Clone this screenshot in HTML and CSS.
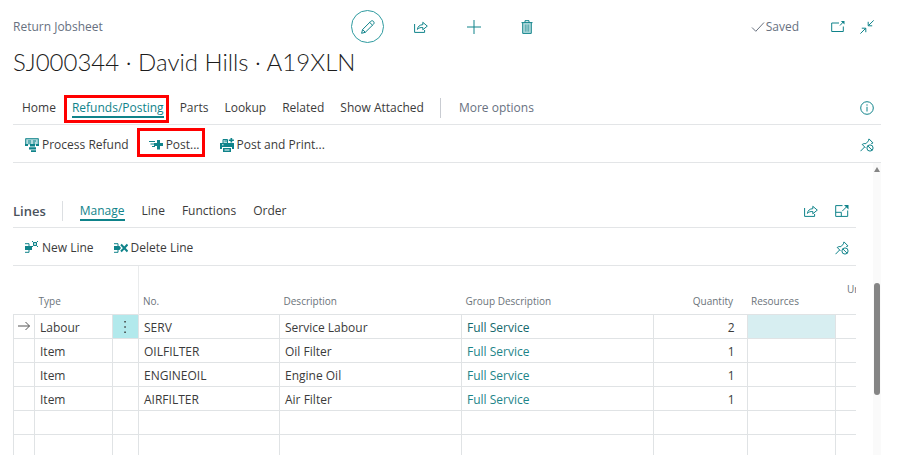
FILE: index.html
```html
<!DOCTYPE html>
<html lang="en">
<head>
<meta charset="utf-8">
<title>Return Jobsheet</title>
<link rel="stylesheet" href="styles.css">
</head>
<body>
<svg class="sprite" aria-hidden="true">
  <symbol id="share" viewBox="0 0 14 14"><path d="M.6 4v8.400h10V10M3.400 9.400c.5-3.100 2.300-4.600 5.400-4.700V2.300l4.500 3.800-4.500 3.700V7.500c-2.400-.1-4 .4-5.400 1.900z"/></symbol>
  <symbol id="pin" viewBox="0 0 14 14"><path d="M.5 13.200 4.600 9M2.200 6.400l3.200 3.300M2.200 6.500c1.300-1 2.500-1.100 3.700-.8l2.600-2.900c-.2-.7 0-1.300.5-1.900l4 4c-.5.500-1.100.7-1.800.5"/><circle cx="10" cy="10" r="3.100"/><path d="M7.800 7.900l4.300 4.300"/></symbol>
</svg>

<header class="top">
  <div class="bar">
    <span class="caption">Return Jobsheet</span>
    <div class="tools">
      <button class="tool ring" aria-label="Edit"><svg class="icon" viewBox="0 0 14 14"><path d="M.6 13.300l1-3.800L9.700 1.400c1.900-1.900 4.600.9 2.800 2.800l-8.200 8.100zM1.600 9.500l2.700 2.800M8.700 2.400l2.800 2.800"/></svg></button>
      <button class="tool" aria-label="Share"><svg class="icon"><use href="#share"/></svg></button>
      <button class="tool" aria-label="New"><svg class="icon" viewBox="0 0 14 14"><path d="M7 0v14M0 7h14"/></svg></button>
      <button class="tool" aria-label="Delete"><svg class="icon" viewBox="0 0 14 14"><path class="tint" d="M3 3h8v10.400H3z"/><path d="M1.500 2.600h11M5 2.400V.7h4v1.700M2.700 2.800v10.600h8.600V2.800"/><path class="fine" d="M5.300 4.500v7.200M7 4.500v7.200M8.700 4.500v7.200"/></svg></button>
    </div>
    <div class="status">
      <span class="saved"><svg class="icon" viewBox="0 0 14 14"><path d="M1 7.500l3.800 3.800L13 2.500"/></svg>Saved</span>
      <button aria-label="Open in new window"><svg class="icon" viewBox="0 0 14 14"><path d="M8 3H.7v8.500h11.600V6.500M9 5.500l3.300-3.600"/><path class="solid" d="M9.800 1h3.700v3.600z"/></svg></button>
      <button aria-label="Collapse"><svg class="icon" viewBox="0 0 14 14"><path d="M13.700.4 8.300 5.700M8.200 1.800v4h4M.4 13.600l5.300-5.300M1.800 8.200h4v4"/></svg></button>
    </div>
  </div>
  <h1>SJ000344 · David Hills · A19XLN</h1>
  <nav class="tabs">
    <button>Home</button>
    <button class="active marked">Refunds/Posting</button>
    <button>Parts</button>
    <button>Lookup</button>
    <button>Related</button>
    <button>Show Attached</button>
    <button class="more">More options</button>
    <button class="end" aria-label="Details"><svg class="icon" viewBox="0 0 14 14"><circle cx="7" cy="7" r="6.300"/><path d="M7 5.800V10.500M7 3.300v1.400"/></svg></button>
  </nav>
  <div class="actions">
    <button><svg class="icon" viewBox="0 0 14 14"><path class="tint" d="M1 1h12v6H1z"/><path d="M.5.7h13M.7.7v6.500M13.300.7v6.500"/><path class="solid" d="M0 6h3v2H0zM11 6h3v2h-3zM5 6h5v2.500H5zM4 9.300h7v2.200H4zM6 12.300h5V14H6z"/><path d="M3 3h3M8 3h3M3 5h3M8 5h2"/></svg>Process Refund</button>
    <button class="marked"><svg class="icon" viewBox="0 0 14 14"><path d="M0 3.500h6M1.500 6h4M3 8.500h3"/><path class="solid" d="M8 2h3v3h3v3h-3v3.500H8V8H5V5h3z"/></svg>Post...</button>
    <button><svg class="icon" viewBox="0 0 14 14"><path class="tint" d="M3 1.500h5V5H3z"/><path class="solid" d="M0 5h14v6h-2V9H2v2H0zM3 10h8v4H3zM10.500 0h1.700v1.500h1.700v1.600h-1.700v1.500h-1.700V3.100H8.800V1.500h1.700z"/><path d="M3 5V1.500h4.500V5M4.500 3h3"/><path class="paper" d="M4.500 12h5M2 6.800h1.500"/></svg>Post and Print...</button>
    <button class="end" aria-label="Unpin"><svg class="icon"><use href="#pin"/></svg></button>
  </div>
</header>

<main class="body">
  <section class="lines">
    <div class="tabs">
      <h2>Lines</h2>
      <button class="active">Manage</button>
      <button>Line</button>
      <button>Functions</button>
      <button>Order</button>
      <button class="end" aria-label="Share lines"><svg class="icon"><use href="#share"/></svg></button>
      <button aria-label="Expand"><svg class="icon" viewBox="0 0 14 14"><path d="M7.500 1.600H.7v10.800h12V6.500M.7 8.300h5.600v4M7.200 7.200l5-5"/><path class="solid" d="M9 1h4.500v4.500z"/></svg></button>
    </div>
    <div class="actions">
      <button><svg class="icon" viewBox="0 0 14 14"><path class="solid" d="M0 5h7v4H0z"/><path d="M0 2.700h4V5M0 11.300h4V9"/><path class="tint" d="M8.500 1.500h3v3h-3z"/><path d="M8.500 1.500h3v3h-3zM7 0l1.500 1.500M13 0l-1.500 1.500M7 6l1.500-1.500M13 6l-1.500-1.500"/></svg>New Line</button>
      <button><svg class="icon" viewBox="0 0 14 14"><path class="solid" d="M0 5h5.500l1.500 2-1.500 2H0z"/><path d="M0 2.700h4V5M0 11.300h4V9"/><path class="heavy" d="M7 3.500l6.500 7M13.500 3.500l-6.500 7"/></svg>Delete Line</button>
      <button class="end" aria-label="Unpin lines"><svg class="icon"><use href="#pin"/></svg></button>
    </div>
    <table>
      <colgroup><col class="c-sel"><col class="c-type"><col class="c-menu"><col class="c-no"><col class="c-desc"><col><col class="c-qty"><col class="c-res"><col class="c-unit"></colgroup>
      <thead><tr><th></th><th>Type</th><th class="frozen"></th><th>No.</th><th>Description</th><th>Group Description</th><th class="num">Quantity</th><th>Resources</th><th class="cut">Unit</th></tr></thead>
      <tbody>
        <tr><td class="sel"><svg class="icon arrow" viewBox="0 0 14 14"><path d="M1 7h11.500M8.500 3l4 4-4 4"/></svg></td><td>Labour</td><td class="menu"><button aria-label="Row menu"><svg class="icon" viewBox="0 0 14 14"><path class="solid" d="M5.300 2h1.500v1.500H5.300zM5.300 7.200h1.500v1.500H5.300zM5.300 12.400h1.500v1.500H5.300z"/></svg></button></td><td>SERV</td><td>Service Labour</td><td><a class="dark" href="#">Full Service</a></td><td class="num">2</td><td class="hot"></td><td></td></tr>
        <tr><td></td><td>Item</td><td></td><td>OILFILTER</td><td>Oil Filter</td><td><a href="#">Full Service</a></td><td class="num">1</td><td></td><td></td></tr>
        <tr><td></td><td>Item</td><td></td><td>ENGINEOIL</td><td>Engine Oil</td><td><a href="#">Full Service</a></td><td class="num">1</td><td></td><td></td></tr>
        <tr><td></td><td>Item</td><td></td><td>AIRFILTER</td><td>Air Filter</td><td><a href="#">Full Service</a></td><td class="num">1</td><td></td><td></td></tr>
        <tr><td></td><td></td><td></td><td></td><td></td><td></td><td></td><td></td><td></td></tr>
        <tr><td></td><td></td><td></td><td></td><td></td><td></td><td></td><td></td><td></td></tr>
      </tbody>
    </table>
  </section>
  <div class="scroll"><span class="up"></span><span class="thumb"></span></div>
</main>
</body>
</html>
```
FILE: styles.css
```css
* { box-sizing: border-box; }
body {
  margin: 0;
  height: 100vh;
  overflow: hidden;
  display: flex;
  flex-direction: column;
  padding: 10px 19px 0 13px;
  background: #fff;
  color: #3b3b3b;
  font: 12px/16px "Open Sans", "Noto Sans", sans-serif;
}
button {
  display: flex;
  align-items: center;
  border: 0;
  padding: 0;
  background: none;
  color: inherit;
  font: inherit;
  white-space: nowrap;
}
.sprite { position: absolute; width: 0; height: 0; }
.icon {
  display: block;
  flex: none;
  width: 14px;
  height: 14px;
  fill: none;
  stroke: #0f838a;
  stroke-width: 1;
}
.icon .solid { fill: #0f838a; stroke: none; }
.icon .tint { fill: #b5dcde; stroke: none; }
.icon .paper { stroke: #fff; }
.icon .heavy { stroke-width: 2; }
.icon .fine { stroke-width: .6; }

.bar { display: grid; grid-template-columns: 1fr auto 1fr; align-items: center; }
.caption, .saved, .more { color: #68717f; }
.tools { display: flex; gap: 20px; }
.tool { width: 33px; height: 33px; justify-content: center; }
.ring { border: 1px solid #2f9ba0; border-radius: 50%; }
.status { display: flex; justify-content: flex-end; align-items: center; gap: 15px; padding-right: 7px; }
.saved { display: flex; align-items: center; gap: 1px; margin-right: 17px; }
.saved .icon { stroke: #68717f; }
h1 {
  margin: 2px 0 1px;
  font: 300 24px/34px Lato, "Open Sans", sans-serif;
  color: #1c1c1c;
}
.tabs {
  display: flex;
  align-items: center;
  gap: 16px;
  border-bottom: 1px solid #e3e5e7;
}
.top .tabs { height: 45px; padding: 11px 7px 0 9px; }
.tabs .active { position: relative; color: #0f838a; box-shadow: 0 2px #0f838a; }
.marked { position: relative; }
.marked::after { content: ""; position: absolute; border: 3px solid #f00; }
.tabs .marked::after { inset: -5px -5px -7px -8px; }
.actions .marked::after { inset: -9px -5px -4px -12px; }
.end { margin-left: auto; }
.more::before { content: ""; width: 1px; height: 20px; margin-right: 18px; background: #c9ccd2; }
.actions {
  display: flex;
  align-items: center;
  gap: 20px;
  height: 38px;
  padding: 2px 7px 0 12px;
  border-bottom: 1px solid #e3e5e7;
}
.actions button { gap: 3px; }

.body { flex: 1; min-height: 0; display: flex; gap: 17px; }
.lines { flex: 1; min-width: 0; padding-top: 31px; }
.lines .tabs { height: 34px; padding-right: 7px; gap: 17px; }
h2 {
  margin: 0;
  padding-right: 16px;
  border-right: 1px solid #dcdfe2;
  font: 600 13px/20px "Open Sans", "Noto Sans", sans-serif;
  color: #4a525c;
}
table { width: 100%; table-layout: fixed; border-collapse: collapse; }
.c-sel, .c-unit { width: 21px; }
.c-type { width: 78px; }
.c-menu { width: 26px; }
.c-no { width: 141px; }
.c-desc { width: 182px; }
.c-qty { width: 94px; }
.c-res { width: 88px; }
th {
  height: 48px;
  padding: 0 4px 5px;
  vertical-align: bottom;
  text-align: left;
  font-weight: 400;
  font-size: 10px;
  color: #6b737a;
}
th.frozen { border-right: 1px solid #e9ebec; }
th.num { padding-right: 14px; text-align: right; }
th.cut { padding: 0 0 17px 12px; overflow: hidden; }
td {
  height: 24px;
  padding: 3px 5px 0;
  border: 1px solid #e0e3e5;
  white-space: nowrap;
}
td:last-child { border-right: 0; }
td.num { padding-right: 12px; text-align: right; }
td.sel, td.menu { padding: 0 3px; }
td.menu { background: #b2e9ec; }
.menu button { margin: auto; }
.menu .solid { fill: #3b3b3b; }
.arrow { stroke: #555; }
td.hot { background: #d7eef1; }
a { color: #1d8589; text-decoration: none; }
a.dark { color: #14696d; }

.scroll {
  width: 8px;
  flex: none;
  display: flex;
  flex-direction: column;
  align-items: center;
  padding-top: 4px;
  background: #fafafa;
}
.up { border: 3px solid transparent; border-top: 0; border-bottom: 5px solid #858585; }
.thumb { width: 6px; height: 112px; margin-top: 111px; border-radius: 3px; background: #858585; }
```
